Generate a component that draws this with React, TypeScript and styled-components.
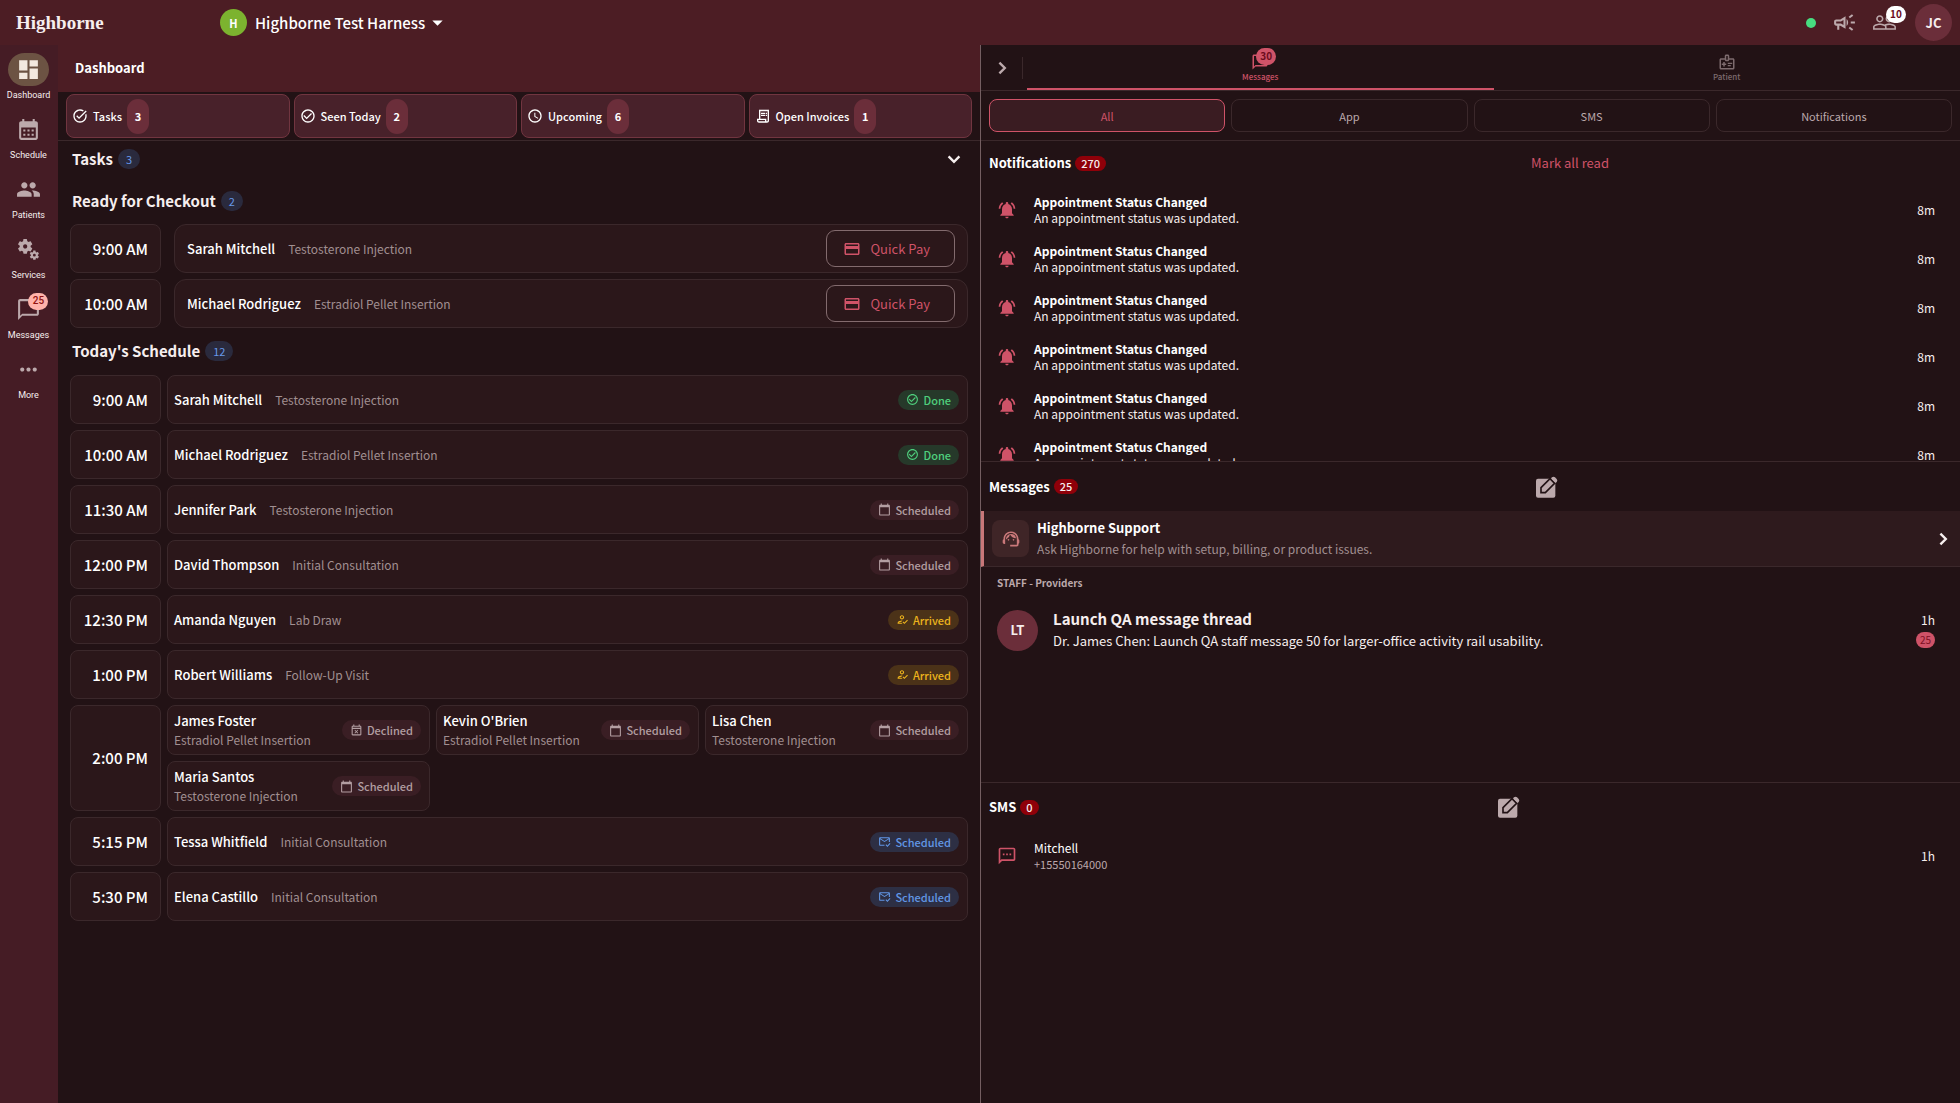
import React from "react";
import styled, { createGlobalStyle, css } from "styled-components";
import {
  MdAccessTime,
  MdArrowDropDown,
  MdCalendarMonth,
  MdCalendarToday,
  MdChatBubbleOutline,
  MdCheckCircleOutline,
  MdDashboard,
  MdMiscellaneousServices,
  MdMoreHoriz,
  MdNotificationsActive,
  MdOutlineCampaign,
  MdOutlineEventBusy,
  MdOutlineHowToReg,
  MdOutlineMarkEmailRead,
  MdOutlineMedicalInformation,
  MdOutlineReceiptLong,
  MdOutlineSms,
  MdPayment,
  MdPeople,
  MdPeopleOutline,
  MdSupportAgent,
  MdTaskAlt,
} from "react-icons/md";

const c = {
  bar: "#4c1d24",
  rail: "#451c25",
  page: "#221215",
  card: "#2b171a",
  line: "#3b282b",
  text: "#f6eeee",
  strong: "#ffffff",
  muted: "#a18f91",
  soft: "#bca9ac",
  accent: "#cf5368",
  wine: "#6b2e3a",
  crimson: "#8f0009",
};

const GlobalStyle = createGlobalStyle`
  *, *::before, *::after { box-sizing: border-box; }
  body {
    margin: 0;
    background: ${c.page};
    color: ${c.text};
    font-family: "Noto Sans CJK SC", "Noto Sans", sans-serif;
    font-size: 12px;
    line-height: 16px;
  }
  h1, h2, h3, p, ul { margin: 0; padding: 0; }
  ul { list-style: none; }
  button { font: inherit; color: inherit; background: none; border: 0; padding: 0; margin: 0; cursor: pointer; }
  svg { display: block; flex: none; }
`;

const Shell = styled.div`
  display: flex;
  flex-direction: column;
  height: 100vh;
  overflow: hidden;
`;

/* ---------- top bar ---------- */

const TopBar = styled.header`
  display: flex;
  align-items: center;
  flex: none;
  height: 45px;
  padding: 0 8px 0 16px;
  background: ${c.bar};
`;

const Brand = styled.div`
  width: 204px;
  font-family: "Liberation Serif", serif;
  font-weight: 700;
  font-size: 19px;
  line-height: 24px;
`;

const Tenant = styled.button`
  display: flex;
  align-items: center;
  font-size: 15px;
  font-weight: 500;
  line-height: 20px;
  color: ${c.strong};
`;

const Disc = styled.span<{ $size: number; $bg: string; $font: number }>`
  display: flex;
  align-items: center;
  justify-content: center;
  flex: none;
  width: ${(p) => p.$size}px;
  height: ${(p) => p.$size}px;
  border-radius: 50%;
  background: ${(p) => p.$bg};
  font-size: ${(p) => p.$font}px;
  font-weight: 700;
`;

const TenantName = styled.span`
  margin: 0 0 0 8px;
`;

const TopTools = styled.div`
  display: flex;
  align-items: center;
  margin-left: auto;
`;

const OnlineDot = styled.span`
  width: 10px;
  height: 10px;
  margin-right: 8px;
  border-radius: 50%;
  background: #47dd80;
`;

const ToolButton = styled.button`
  position: relative;
  display: flex;
  align-items: center;
  justify-content: center;
  width: 40px;
  height: 40px;
  color: ${c.soft};
`;

const Bubble = styled.span<{ $bg: string; $fg: string }>`
  position: absolute;
  top: 0;
  left: 50%;
  min-width: 20px;
  height: 17px;
  padding: 0 4px;
  border-radius: 9px;
  background: ${(p) => p.$bg};
  color: ${(p) => p.$fg};
  font-size: 10px;
  font-weight: 500;
  line-height: 16px;
  text-align: center;
`;

const ToolBubble = styled(Bubble)`
  top: 3px;
  left: 22px;
  font-weight: 700;
`;

const Account = styled.button`
  margin-left: 11px;
`;

/* ---------- rail ---------- */

const Body = styled.div`
  display: flex;
  flex: 1;
  min-height: 0;
`;

const Rail = styled.nav`
  display: flex;
  flex-direction: column;
  align-items: center;
  gap: 11px;
  flex: none;
  width: 58px;
  padding: 8px 1px 0 0;
  background: ${c.rail};
`;

const RailItem = styled.button`
  display: flex;
  flex-direction: column;
  align-items: center;
  gap: 3px;
  font-family: Roboto, sans-serif;
  font-size: 9px;
  line-height: 13px;
  color: ${c.text};
`;

const RailIcon = styled.span<{ $active?: boolean }>`
  position: relative;
  display: flex;
  align-items: center;
  justify-content: center;
  width: 41px;
  height: 33px;
  border-radius: 17px;
  color: ${(p) => (p.$active ? "#f3e9df" : c.soft)};
  background: ${(p) => (p.$active ? "#6c5343" : "transparent")};
`;

/* ---------- dashboard ---------- */

const Main = styled.main`
  display: flex;
  flex-direction: column;
  flex: 1 1 0;
  min-width: 0;
`;

const TitleBar = styled.div`
  display: flex;
  align-items: center;
  height: 47px;
  padding: 0 17px 2px;
  background: ${c.bar};
`;

const PageTitle = styled.h1`
  font-size: 13px;
  font-weight: 700;
  line-height: 20px;
  color: ${c.strong};
`;

const Stats = styled.div`
  display: grid;
  grid-template-columns: repeat(4, 1fr);
  gap: 4px;
  padding: 2px 8px;
  border-bottom: 1px solid ${c.line};
`;

const Stat = styled.button`
  display: flex;
  align-items: center;
  gap: 5px;
  height: 44px;
  padding: 0 5px;
  border: 1px solid #713540;
  border-radius: 8px;
  background: #48212a;
  font-size: 11px;
  font-weight: 500;
  color: ${c.strong};
`;

const StatCount = styled.span`
  display: flex;
  align-items: center;
  justify-content: center;
  min-width: 22px;
  height: 35px;
  border-radius: 11px;
  background: ${c.wine};
  font-weight: 700;
`;

const Content = styled.div`
  display: flex;
  flex-direction: column;
  padding: 0 12px;
`;

const GroupHead = styled.div<{ $height: number }>`
  display: flex;
  align-items: center;
  gap: 5px;
  height: ${(p) => p.$height}px;
  padding: 0 6px 2px 2px;
`;

const GroupTitle = styled.h2`
  font-size: 15px;
  font-weight: 700;
  line-height: 20px;
`;

const GroupCount = styled.span`
  min-width: 22px;
  height: 20px;
  padding: 0 8px;
  border-radius: 10px;
  background: #2a2a3d;
  color: #6799ea;
  font-size: 11px;
  line-height: 20px;
  text-align: center;
`;

const Toggle = styled.button`
  margin-left: auto;
`;

const Rows = styled.ul`
  display: flex;
  flex-direction: column;
  gap: 6px;
`;

const Row = styled.li<{ $gap: number }>`
  display: flex;
  gap: ${(p) => p.$gap}px;
`;

const box = css`
  border: 1px solid ${c.line};
  background: ${c.card};
`;

const Time = styled.div`
  ${box}
  display: flex;
  align-items: center;
  justify-content: flex-end;
  flex: none;
  width: 91px;
  min-height: 49px;
  padding-right: 12px;
  border-radius: 8px;
  font-size: 15px;
  font-weight: 500;
  color: ${c.strong};
`;

const Slots = styled.div<{ $cols: number }>`
  display: grid;
  grid-template-columns: repeat(${(p) => p.$cols}, 1fr);
  gap: 6px;
  flex: 1;
  min-width: 0;
`;

const Slot = styled.div<{ $checkout?: boolean; $stacked?: boolean }>`
  ${box}
  display: flex;
  align-items: center;
  justify-content: space-between;
  height: ${(p) => (p.$stacked ? 50 : 49)}px;
  padding: ${(p) => (p.$checkout ? "0 12px" : "0 8px 0 6px")};
  border-radius: ${(p) => (p.$checkout ? 12 : 8)}px;
`;

const Person = styled.div<{ $stacked?: boolean }>`
  display: flex;
  flex-direction: ${(p) => (p.$stacked ? "column" : "row")};
  align-items: ${(p) => (p.$stacked ? "flex-start" : "center")};
  gap: ${(p) => (p.$stacked ? 1 : 13)}px;
  white-space: nowrap;
`;

const Name = styled.span`
  font-size: 13px;
  font-weight: 500;
  line-height: 18px;
  color: ${c.strong};
`;

const Service = styled.span`
  font-size: 12px;
  line-height: 18px;
  color: ${c.muted};
`;

const PayButton = styled.button`
  display: flex;
  align-items: center;
  gap: 9px;
  height: 37px;
  padding: 0 24px 0 16px;
  border: 1px solid #836b6e;
  border-radius: 9px;
  font-size: 13px;
  font-weight: 400;
  color: ${c.accent};
`;

type Tone = "done" | "plain" | "arrived" | "mailed";

const tones: Record<Tone, { bg: string; fg: string }> = {
  done: { bg: "#26392a", fg: "#4fcf7d" },
  plain: { bg: "#3a1e24", fg: "#b39ea2" },
  arrived: { bg: "#4b3218", fg: "#edb41d" },
  mailed: { bg: "#2d2f44", fg: "#6297e6" },
};

const StatusPill = styled.span<{ $tone: Tone }>`
  display: flex;
  align-items: center;
  gap: 4px;
  height: 20px;
  padding: 0 8px;
  border-radius: 10px;
  background: ${(p) => tones[p.$tone].bg};
  color: ${(p) => tones[p.$tone].fg};
  font-size: 11px;
  font-weight: 500;
`;

/* ---------- activity panel ---------- */

const Panel = styled.aside`
  display: flex;
  flex-direction: column;
  flex: none;
  width: 50%;
  border-left: 1px solid #745e61;
`;

const TabBar = styled.div`
  display: flex;
  flex: none;
  height: 46px;
  border-bottom: 1px solid ${c.line};
`;

const Collapse = styled.button`
  display: flex;
  align-items: center;
  justify-content: center;
  width: 41px;
  color: ${c.soft};
`;

const Divider = styled.span`
  align-self: center;
  width: 1px;
  height: 22px;
  margin-right: 4px;
  background: ${c.line};
`;

const Tab = styled.button<{ $active?: boolean }>`
  display: flex;
  flex: 1;
  flex-direction: column;
  align-items: center;
  padding-top: 7px;
  border-bottom: 2px solid ${(p) => (p.$active ? c.accent : "transparent")};
  color: ${(p) => (p.$active ? c.accent : "#7d6b6e")};
  font-size: 8px;
  font-weight: 500;
  line-height: 10px;
`;

const TabIcon = styled.span`
  position: relative;
  display: flex;
  padding: 1px;
`;

const TabBubble = styled(Bubble)`
  top: -4px;
  left: 6px;
  font-weight: 700;
`;

const Filters = styled.div`
  display: grid;
  grid-template-columns: repeat(4, 1fr);
  gap: 6px;
  flex: none;
  padding: 8px;
  border-bottom: 1px solid ${c.line};
`;

const Filter = styled.button<{ $active?: boolean }>`
  height: 33px;
  border: 1px solid ${(p) => (p.$active ? c.accent : c.line)};
  border-radius: 8px;
  background: ${(p) => (p.$active ? "#3a1c22" : "transparent")};
  color: ${(p) => (p.$active ? c.accent : c.soft)};
  font-size: 11px;
`;

const Section = styled.section`
  display: flex;
  flex-direction: column;
  flex: 1 1 0;
  min-height: 0;
  overflow: hidden;
  & + & {
    border-top: 1px solid ${c.line};
  }
`;

const SectionHead = styled.div<{ $height: number }>`
  display: flex;
  align-items: center;
  flex: none;
  height: ${(p) => p.$height}px;
  padding: 0 8px;
`;

const SectionTitle = styled.h2`
  font-size: 13px;
  font-weight: 700;
  line-height: 18px;
  color: ${c.strong};
`;

const SectionCount = styled.span`
  margin-left: 4px;
  padding: 0 6px;
  border-radius: 8px;
  background: ${c.crimson};
  color: ${c.text};
  font-size: 11px;
  font-weight: 500;
  line-height: 15px;
`;

const Spring = styled.span<{ $grow: number }>`
  flex: ${(p) => p.$grow} 1 0;
`;

const TextButton = styled.button`
  font-size: 13px;
  color: ${c.accent};
`;

const IconButton = styled.button`
  color: ${c.soft};
`;

const Feed = styled.ul`
  flex: 1;
  min-height: 0;
  overflow: hidden;
`;

const FeedItem = styled.li`
  display: flex;
  align-items: center;
  height: 49px;
  padding: 0 25px 0 16px;
  color: ${c.accent};
`;

const FeedText = styled.div`
  flex: 1;
  margin-left: 17px;
`;

const FeedTitle = styled.h3<{ $light?: boolean }>`
  font-size: 12px;
  font-weight: ${(p) => (p.$light ? 400 : 700)};
  line-height: 17px;
  color: ${c.strong};
`;

const FeedBody = styled.p<{ $small?: boolean }>`
  font-size: ${(p) => (p.$small ? 11 : 12)}px;
  line-height: 16px;
  color: ${(p) => (p.$small ? c.soft : c.text)};
`;

const Age = styled.span`
  font-size: 12px;
  color: ${c.text};
`;

const Support = styled.button`
  display: flex;
  align-items: center;
  flex: none;
  height: 56px;
  padding: 0 9px 0 8px;
  border-left: 3px solid #c9787a;
  border-bottom: 1px solid ${c.line};
  background: #2e1a1d;
  text-align: left;
`;

const SupportIcon = styled.span`
  display: flex;
  align-items: center;
  justify-content: center;
  width: 37px;
  height: 37px;
  border-radius: 8px;
  background: #3f2527;
  color: #c9787a;
`;

const SupportText = styled.span`
  display: flex;
  flex: 1;
  flex-direction: column;
  gap: 3px;
  margin-left: 8px;
  color: ${c.strong};
  font-size: 12px;
`;

const SupportName = styled.strong`
  font-size: 13px;
  line-height: 18px;
`;

const SupportHint = styled.span`
  line-height: 18px;
  color: ${c.muted};
`;

const StaffLabel = styled.h3`
  padding: 8px 16px;
  font-size: 10px;
  font-weight: 700;
  line-height: 16px;
  color: ${c.soft};
`;

const Thread = styled.button`
  display: flex;
  align-items: center;
  height: 62px;
  padding: 0 25px 0 16px;
  text-align: left;
`;

const ThreadText = styled.span`
  display: flex;
  flex: 1;
  flex-direction: column;
  gap: 2px;
  margin-left: 15px;
  font-size: 13px;
  line-height: 20px;
`;

const ThreadTitle = styled.strong`
  font-size: 15px;
`;

const ThreadMeta = styled.span`
  display: flex;
  flex-direction: column;
  align-items: flex-end;
  gap: 4px;
`;

const Unread = styled.span`
  padding: 0 4px;
  border-radius: 8px;
  background: ${c.accent};
  color: #7d1024;
  font-size: 10px;
  line-height: 16px;
`;

function Chevron({ down }: { down?: boolean }) {
  return (
    <svg width="16" height="16" viewBox="0 0 16 16" fill="none" stroke="currentColor" strokeWidth="2.4">
      <path d={down ? "M2.6 5.4 8 10.8 13.4 5.4" : "M5.4 2.6 10.8 8 5.4 13.4"} />
    </svg>
  );
}

/* A filled note with a pencil laid over its upper right corner. */
function ComposeIcon() {
  return (
    <svg width="22" height="22" viewBox="0 0 66 66" fill="currentColor">
      <rect x="0" y="8" width="58" height="57" rx="6" />
      <path d="M15 50V35L42 8 56 22 28 50Z" stroke={c.page} strokeWidth="5" />
      <path d="M45 7l3-3q5-4 9 0l5 5q4 4 0 9l-3 3Z" />
    </svg>
  );
}

const railItems = [
  { label: "Dashboard", icon: <MdDashboard size={25} />, active: true },
  { label: "Schedule", icon: <MdCalendarMonth size={25} /> },
  { label: "Patients", icon: <MdPeople size={25} /> },
  { label: "Services", icon: <MdMiscellaneousServices size={25} /> },
  { label: "Messages", icon: <MdChatBubbleOutline size={25} />, badge: "25" },
  { label: "More", icon: <MdMoreHoriz size={25} /> },
];

const stats = [
  { label: "Tasks", count: 3, icon: <MdTaskAlt size={16} /> },
  { label: "Seen Today", count: 2, icon: <MdCheckCircleOutline size={16} /> },
  { label: "Upcoming", count: 6, icon: <MdAccessTime size={16} /> },
  { label: "Open Invoices", count: 1, icon: <MdOutlineReceiptLong size={16} /> },
];

const checkout = [
  { time: "9:00 AM", name: "Sarah Mitchell", service: "Testosterone Injection" },
  { time: "10:00 AM", name: "Michael Rodriguez", service: "Estradiol Pellet Insertion" },
];

type Status = "Done" | "Scheduled" | "Arrived" | "Declined" | "Mailed";

const statuses: Record<Status, { label: string; tone: Tone; icon: React.ReactNode }> = {
  Done: { label: "Done", tone: "done", icon: <MdCheckCircleOutline size={13} /> },
  Scheduled: { label: "Scheduled", tone: "plain", icon: <MdCalendarToday size={13} /> },
  Arrived: { label: "Arrived", tone: "arrived", icon: <MdOutlineHowToReg size={13} /> },
  Declined: { label: "Declined", tone: "plain", icon: <MdOutlineEventBusy size={13} /> },
  Mailed: { label: "Scheduled", tone: "mailed", icon: <MdOutlineMarkEmailRead size={13} /> },
};

const schedule: { time: string; slots: [string, string, Status][] }[] = [
  { time: "9:00 AM", slots: [["Sarah Mitchell", "Testosterone Injection", "Done"]] },
  { time: "10:00 AM", slots: [["Michael Rodriguez", "Estradiol Pellet Insertion", "Done"]] },
  { time: "11:30 AM", slots: [["Jennifer Park", "Testosterone Injection", "Scheduled"]] },
  { time: "12:00 PM", slots: [["David Thompson", "Initial Consultation", "Scheduled"]] },
  { time: "12:30 PM", slots: [["Amanda Nguyen", "Lab Draw", "Arrived"]] },
  { time: "1:00 PM", slots: [["Robert Williams", "Follow-Up Visit", "Arrived"]] },
  {
    time: "2:00 PM",
    slots: [
      ["James Foster", "Estradiol Pellet Insertion", "Declined"],
      ["Kevin O'Brien", "Estradiol Pellet Insertion", "Scheduled"],
      ["Lisa Chen", "Testosterone Injection", "Scheduled"],
      ["Maria Santos", "Testosterone Injection", "Scheduled"],
    ],
  },
  { time: "5:15 PM", slots: [["Tessa Whitfield", "Initial Consultation", "Mailed"]] },
  { time: "5:30 PM", slots: [["Elena Castillo", "Initial Consultation", "Mailed"]] },
];

function Dashboard() {
  return (
    <Main>
      <TitleBar>
        <PageTitle>Dashboard</PageTitle>
      </TitleBar>
      <Stats>
        {stats.map((s) => (
          <Stat key={s.label}>
            {s.icon}
            <span>{s.label}</span>
            <StatCount>{s.count}</StatCount>
          </Stat>
        ))}
      </Stats>
      <Content>
        <GroupHead $height={38}>
          <GroupTitle>Tasks</GroupTitle>
          <GroupCount>3</GroupCount>
          <Toggle aria-label="Collapse tasks">
            <Chevron down />
          </Toggle>
        </GroupHead>
        <GroupHead $height={45}>
          <GroupTitle>Ready for Checkout</GroupTitle>
          <GroupCount>2</GroupCount>
        </GroupHead>
        <Rows>
          {checkout.map((r) => (
            <Row key={r.time} $gap={13}>
              <Time>{r.time}</Time>
              <Slots $cols={1}>
                <Slot $checkout>
                  <Person>
                    <Name>{r.name}</Name>
                    <Service>{r.service}</Service>
                  </Person>
                  <PayButton>
                    <MdPayment size={18} />
                    Quick Pay
                  </PayButton>
                </Slot>
              </Slots>
            </Row>
          ))}
        </Rows>
        <GroupHead $height={47}>
          <GroupTitle>Today's Schedule</GroupTitle>
          <GroupCount>12</GroupCount>
        </GroupHead>
        <Rows>
          {schedule.map((r) => {
            const stacked = r.slots.length > 1;
            return (
              <Row key={r.time} $gap={6}>
                <Time>{r.time}</Time>
                <Slots $cols={stacked ? 3 : 1}>
                  {r.slots.map(([name, service, status]) => (
                    <Slot key={name} $stacked={stacked}>
                      <Person $stacked={stacked}>
                        <Name>{name}</Name>
                        <Service>{service}</Service>
                      </Person>
                      <StatusPill $tone={statuses[status].tone}>
                        {statuses[status].icon}
                        {statuses[status].label}
                      </StatusPill>
                    </Slot>
                  ))}
                </Slots>
              </Row>
            );
          })}
        </Rows>
      </Content>
    </Main>
  );
}

function Activity() {
  return (
    <Panel>
      <TabBar>
        <Collapse aria-label="Collapse panel">
          <Chevron />
        </Collapse>
        <Divider />
        <Tab $active>
          <TabIcon>
            <MdChatBubbleOutline size={18} />
            <TabBubble $bg={c.accent} $fg="#6d0c1d">30</TabBubble>
          </TabIcon>
          Messages
        </Tab>
        <Tab>
          <TabIcon>
            <MdOutlineMedicalInformation size={18} />
          </TabIcon>
          Patient
        </Tab>
      </TabBar>
      <Filters>
        {["All", "App", "SMS", "Notifications"].map((f, i) => (
          <Filter key={f} $active={i === 0}>
            {f}
          </Filter>
        ))}
      </Filters>
      <Section>
        <SectionHead $height={44}>
          <SectionTitle>Notifications</SectionTitle>
          <SectionCount>270</SectionCount>
          <Spring $grow={425} />
          <TextButton>Mark all read</TextButton>
          <Spring $grow={343} />
        </SectionHead>
        <Feed>
          {Array.from({ length: 6 }, (_, i) => (
            <FeedItem key={i}>
              <MdNotificationsActive size={20} />
              <FeedText>
                <FeedTitle>Appointment Status Changed</FeedTitle>
                <FeedBody>An appointment status was updated.</FeedBody>
              </FeedText>
              <Age>8m</Age>
            </FeedItem>
          ))}
        </Feed>
      </Section>
      <Section>
        <SectionHead $height={49}>
          <SectionTitle>Messages</SectionTitle>
          <SectionCount>25</SectionCount>
          <Spring $grow={458} />
          <IconButton aria-label="New message">
            <ComposeIcon />
          </IconButton>
          <Spring $grow={395} />
        </SectionHead>
        <Support>
          <SupportIcon>
            <MdSupportAgent size={20} />
          </SupportIcon>
          <SupportText>
            <SupportName>Highborne Support</SupportName>
            <SupportHint>Ask Highborne for help with setup, billing, or product issues.</SupportHint>
          </SupportText>
          <Chevron />
        </Support>
        <StaffLabel>STAFF - Providers</StaffLabel>
        <Thread>
          <Disc $size={41} $bg={c.wine} $font={13}>
            LT
          </Disc>
          <ThreadText>
            <ThreadTitle>Launch QA message thread</ThreadTitle>
            <span>Dr. James Chen: Launch QA staff message 50 for larger-office activity rail usability.</span>
          </ThreadText>
          <ThreadMeta>
            <Age>1h</Age>
            <Unread>25</Unread>
          </ThreadMeta>
        </Thread>
      </Section>
      <Section>
        <SectionHead $height={48}>
          <SectionTitle>SMS</SectionTitle>
          <SectionCount>0</SectionCount>
          <Spring $grow={461} />
          <IconButton aria-label="New SMS">
            <ComposeIcon />
          </IconButton>
          <Spring $grow={433} />
        </SectionHead>
        <Feed>
          <FeedItem>
            <MdOutlineSms size={20} />
            <FeedText>
              <FeedTitle $light>Mitchell</FeedTitle>
              <FeedBody $small>+15550164000</FeedBody>
            </FeedText>
            <Age>1h</Age>
          </FeedItem>
        </Feed>
      </Section>
    </Panel>
  );
}

export default function App() {
  return (
    <Shell>
      <GlobalStyle />
      <TopBar>
        <Brand>Highborne</Brand>
        <Tenant>
          <Disc $size={27} $bg="#7cb32f" $font={11}>
            H
          </Disc>
          <TenantName>Highborne Test Harness</TenantName>
          <MdArrowDropDown size={25} />
        </Tenant>
        <TopTools>
          <OnlineDot />
          <ToolButton aria-label="Announcements">
            <MdOutlineCampaign size={25} />
          </ToolButton>
          <ToolButton aria-label="Team">
            <MdPeopleOutline size={25} />
            <ToolBubble $bg="#ffffff" $fg="#6d0c1d">10</ToolBubble>
          </ToolButton>
          <Account aria-label="Account">
            <Disc $size={37} $bg={c.wine} $font={13}>
              JC
            </Disc>
          </Account>
        </TopTools>
      </TopBar>
      <Body>
        <Rail>
          {railItems.map((r) => (
            <RailItem key={r.label}>
              <RailIcon $active={r.active}>
                {r.icon}
                {r.badge && (
                  <Bubble $bg="#ffb3ab" $fg="#8f1210">
                    {r.badge}
                  </Bubble>
                )}
              </RailIcon>
              {r.label}
            </RailItem>
          ))}
        </Rail>
        <Dashboard />
        <Activity />
      </Body>
    </Shell>
  );
}
